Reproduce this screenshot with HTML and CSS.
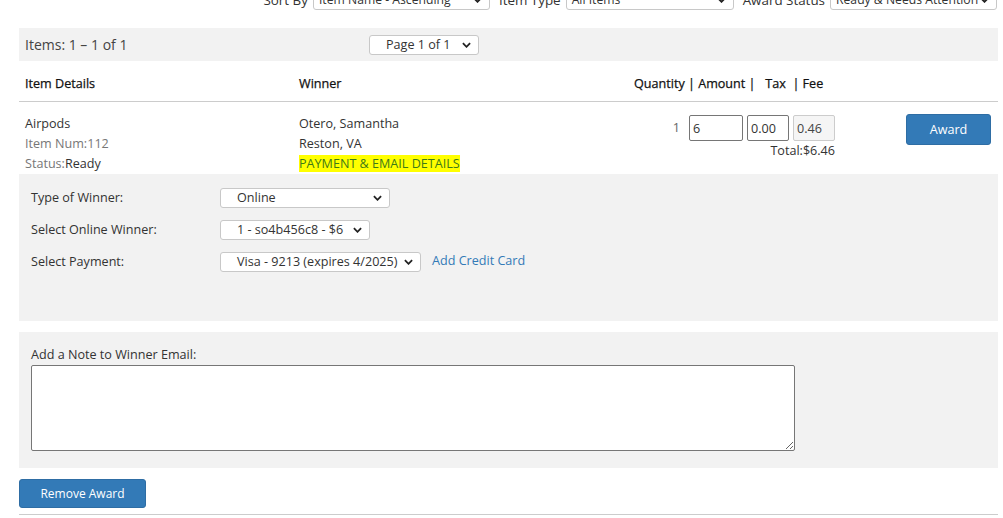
FILE: index.html
```html
<!DOCTYPE html>
<html lang="en">
<head>
  <meta charset="UTF-8">
  <title>Award Items</title>
  <link rel="stylesheet" href="styles.css">
</head>
<body>
  <div class="page">

    <div class="filters">
      <label class="filter-label">Sort By</label>
      <div class="select select-sort"><span>Item Name - Ascending</span><svg class="chev" viewBox="0 0 10 6"><path d="M1 1l4 4 4-4"/></svg></div>
      <label class="filter-label">Item Type</label>
      <div class="select select-type"><span>All Items</span><svg class="chev" viewBox="0 0 10 6"><path d="M1 1l4 4 4-4"/></svg></div>
      <label class="filter-label">Award Status</label>
      <div class="select select-status"><span>Ready &amp; Needs Attention</span><svg class="chev" viewBox="0 0 10 6"><path d="M1 1l4 4 4-4"/></svg></div>
    </div>

    <div class="pager">
      <div class="pager-count">Items: 1 – 1 of 1</div>
      <div class="select select-page"><span>Page 1 of 1</span><svg class="chev" viewBox="0 0 10 6"><path d="M1 1l4 4 4-4"/></svg></div>
    </div>

    <div class="grid grid-head">
      <div class="cell">Item Details</div>
      <div class="cell">Winner</div>
      <div class="cell">Quantity | Amount | &nbsp; Tax &nbsp;| Fee</div>
      <div class="cell"></div>
    </div>

    <div class="grid grid-row">
      <div class="cell">
        <div>Airpods</div>
        <div class="muted">Item Num:112</div>
        <div><span class="muted">Status:</span>Ready</div>
      </div>
      <div class="cell">
        <div>Otero, Samantha</div>
        <div>Reston, VA</div>
        <div><span class="highlight">PAYMENT &amp; EMAIL DETAILS</span></div>
      </div>
      <div class="cell amounts">
        <div class="amount-inputs">
          <span class="qty">1</span>
          <input class="field field-amount" type="text" value="6">
          <input class="field field-tax" type="text" value="0.00">
          <input class="field field-fee" type="text" value="0.46" disabled>
        </div>
        <div class="total">Total:$6.46</div>
      </div>
      <div class="cell actions">
        <button class="btn btn-award">Award</button>
      </div>
    </div>

    <div class="panel panel-winner">
      <div class="form-row">
        <label class="form-label">Type of Winner:</label>
        <div class="select select-winner-type"><span>Online</span><svg class="chev" viewBox="0 0 10 6"><path d="M1 1l4 4 4-4"/></svg></div>
      </div>
      <div class="form-row">
        <label class="form-label">Select Online Winner:</label>
        <div class="select select-online"><span>1 - so4b456c8 - $6</span><svg class="chev" viewBox="0 0 10 6"><path d="M1 1l4 4 4-4"/></svg></div>
      </div>
      <div class="form-row">
        <label class="form-label">Select Payment:</label>
        <div class="select select-payment"><span>Visa - 9213 (expires 4/2025)</span><svg class="chev" viewBox="0 0 10 6"><path d="M1 1l4 4 4-4"/></svg></div>
        <a class="link" href="#">Add Credit Card</a>
      </div>
    </div>

    <div class="panel panel-note">
      <label class="note-label">Add a Note to Winner Email:</label>
      <textarea class="note"></textarea>
    </div>

    <button class="btn btn-remove">Remove Award</button>

    <div class="divider"></div>
  </div>
</body>
</html>
```

FILE: styles.css
```css
* {
  margin: 0;
  padding: 0;
  box-sizing: border-box;
}

body {
  font-family: 'Open Sans', 'Liberation Sans', Arial, sans-serif;
  font-size: 12.6px;
  line-height: 20px;
  color: #333;
  background: #fff;
  overflow: hidden;
}

.page {
  padding: 0 5px 0 19px;
}

/* 上部フィルター */
.filters {
  display: flex;
  justify-content: flex-end;
  align-items: center;
  margin-top: -10px;
  height: 20px;
  padding-right: 1px;
}

.filter-label {
  font-size: 13.4px;
  margin: 0 5px 0 9px;
}

.select {
  position: relative;
  height: 20px;
  background: #fff;
  border: 1px solid #c8c8c8;
  border-radius: 3px;
  padding-left: 16px;
  line-height: 18px;
  color: #333;
  white-space: nowrap;
  overflow: hidden;
}

.chev {
  position: absolute;
  right: 7px;
  top: 6px;
  width: 9px;
  height: 6px;
  fill: none;
  stroke: #222;
  stroke-width: 2;
}

.filters .select {
  padding-left: 5px;
  font-size: 12.2px;
}

.select-sort { width: 177px; }
.select-type { width: 168px; }
.select-status { width: 167px; }

/* ページャー */
.pager {
  display: flex;
  align-items: center;
  height: 33px;
  margin-top: 18px;
  background: #f2f2f2;
  padding-left: 6px;
}

.pager-count {
  width: 344px;
  font-size: 14px;
  color: #444;
}

.select-page {
  width: 110px;
  padding-left: 16px;
}

/* テーブル */
.grid {
  display: grid;
  grid-template-columns: 280px 335px 210px 1fr;
}

.grid-head {
  height: 41px;
  padding-top: 5px;
  align-items: center;
  border-bottom: 1px solid #ccc;
  color: #111;
  -webkit-text-stroke: 0.25px #111;
}

.grid-head .cell:first-child {
  padding-left: 6px;
}

.grid-row {
  height: 72px;
  padding-top: 12px;
}

.grid-row .cell:first-child {
  padding-left: 6px;
}

.muted {
  color: #777;
}

.highlight {
  background: #ffff00;
  color: #3e7a18;
}

.amounts {
  text-align: right;
  padding-right: 9px;
  padding-top: 1px;
}

.amount-inputs {
  display: flex;
  justify-content: flex-end;
  align-items: center;
  gap: 4px;
}

.qty {
  color: #666;
  margin-right: 5px;
}

.field {
  height: 26px;
  border: 1px solid #767676;
  border-radius: 2px;
  padding: 0 3px;
  font-family: inherit;
  font-size: 12.6px;
  color: #333;
  background: #fff;
}

.field-amount { width: 54px; }
.field-tax { width: 42px; }
.field-fee {
  width: 42px;
  border-color: #ccc;
  background: #f5f5f5;
  color: #444;
}

.actions {
  display: flex;
  justify-content: flex-end;
  padding-right: 7px;
}

.btn {
  background: #337ab7;
  color: #fff;
  border: 1px solid #2e6da4;
  border-radius: 3px;
  font-family: inherit;
  font-size: 12.6px;
  cursor: pointer;
}

.btn-award {
  width: 85px;
  height: 31px;
}

/* パネル */
.panel {
  background: #f2f2f2;
}

.panel-winner {
  height: 147px;
  padding: 14px 0 0 12px;
  display: flex;
  flex-direction: column;
  gap: 12px;
}

.form-row {
  display: flex;
  align-items: center;
  height: 20px;
}

.form-label {
  width: 189px;
}

.select-winner-type { width: 170px; }
.select-online { width: 150px; }
.select-payment { width: 201px; }

.link {
  color: #337ab7;
  text-decoration: none;
  margin-left: 11px;
  margin-top: -2px;
}

.panel-note {
  margin-top: 11px;
  height: 136px;
  padding: 13px 0 0 12px;
}

.note-label {
  display: block;
  line-height: 20px;
}

.note {
  display: block;
  width: 764px;
  height: 86px;
  border: 1px solid #767676;
  border-radius: 2px;
  background: #fff;
  resize: both;
}

.btn-remove {
  margin-top: 11px;
  width: 127px;
  height: 29px;
  font-size: 12px;
}

.divider {
  margin-top: 6px;
  border-top: 1px solid #ccc;
}
```
